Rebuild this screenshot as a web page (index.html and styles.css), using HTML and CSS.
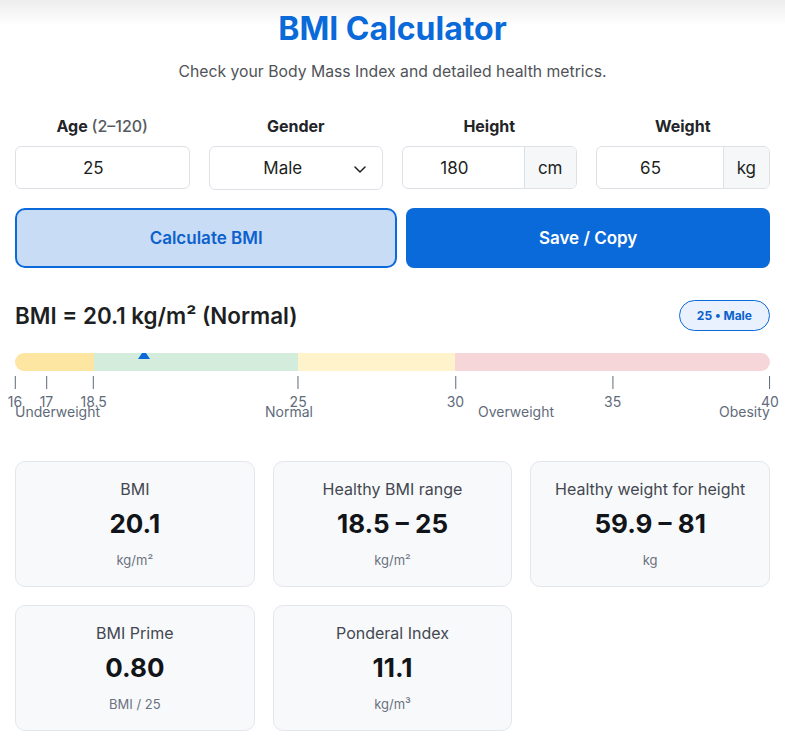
FILE: index.html
```html
<!DOCTYPE html>
<html lang="en">
<head>
<meta charset="utf-8">
<title>BMI Calculator</title>
<link rel="stylesheet" href="styles.css">
</head>
<body>
<main class="app">
  <h1 class="title">BMI Calculator</h1>
  <p class="subtitle">Check your Body Mass Index and detailed health metrics.</p>

  <section class="fields">
    <div class="field">
      <label class="field-label">Age <span class="muted">(2–120)</span></label>
      <div class="control">
        <input class="input" type="text" value="25">
      </div>
    </div>
    <div class="field">
      <label class="field-label">Gender</label>
      <div class="control select-wrap">
        <select class="select">
          <option>Male</option>
          <option>Female</option>
        </select>
        <svg class="chevron" width="12" height="7" viewBox="0 0 12 7" aria-hidden="true"><path d="M1 1l5 5 5-5" fill="none" stroke="#222" stroke-width="1.5" stroke-linecap="round" stroke-linejoin="round"/></svg>
      </div>
    </div>
    <div class="field">
      <label class="field-label">Height</label>
      <div class="control group">
        <input class="input" type="text" value="180">
        <span class="unit">cm</span>
      </div>
    </div>
    <div class="field">
      <label class="field-label">Weight</label>
      <div class="control group">
        <input class="input" type="text" value="65">
        <span class="unit">kg</span>
      </div>
    </div>
  </section>

  <section class="actions">
    <button class="btn btn-calc">Calculate BMI</button>
    <button class="btn btn-save">Save / Copy</button>
  </section>

  <section class="result">
    <h2 class="result-text">BMI = 20.1 kg/m² (Normal)</h2>
    <span class="badge">25 • Male</span>
  </section>

  <section class="scale">
    <div class="bar">
      <span class="seg seg-under" style="width:10.4167%"></span>
      <span class="seg seg-normal" style="width:27.0833%"></span>
      <span class="seg seg-over" style="width:20.8333%"></span>
      <span class="seg seg-obese" style="width:41.6667%"></span>
      <span class="marker" style="left:17.083%"></span>
    </div>
    <div class="ticks">
      <span class="tick" style="left:0%"><i></i><b>16</b></span>
      <span class="tick" style="left:4.1667%"><i></i><b>17</b></span>
      <span class="tick" style="left:10.4167%"><i></i><b>18.5</b></span>
      <span class="tick" style="left:37.5%"><i></i><b>25</b></span>
      <span class="tick" style="left:58.3333%"><i></i><b>30</b></span>
      <span class="tick" style="left:79.1667%"><i></i><b>35</b></span>
      <span class="tick" style="left:100%"><i></i><b>40</b></span>
    </div>
    <div class="categories">
      <span>Underweight</span>
      <span>Normal</span>
      <span>Overweight</span>
      <span>Obesity</span>
    </div>
  </section>

  <section class="cards">
    <div class="card">
      <div class="card-label">BMI</div>
      <div class="card-value">20.1</div>
      <div class="card-unit">kg/m²</div>
    </div>
    <div class="card">
      <div class="card-label">Healthy BMI range</div>
      <div class="card-value">18.5 – 25</div>
      <div class="card-unit">kg/m²</div>
    </div>
    <div class="card">
      <div class="card-label">Healthy weight for height</div>
      <div class="card-value">59.9 – 81</div>
      <div class="card-unit">kg</div>
    </div>
    <div class="card">
      <div class="card-label">BMI Prime</div>
      <div class="card-value">0.80</div>
      <div class="card-unit">BMI / 25</div>
    </div>
    <div class="card">
      <div class="card-label">Ponderal Index</div>
      <div class="card-value">11.1</div>
      <div class="card-unit">kg/m³</div>
    </div>
  </section>
</main>
</body>
</html>
```

FILE: styles.css
```css
* { box-sizing: border-box; }

html, body {
  margin: 0;
  padding: 0;
}

body {
  font-family: Inter, "Noto Sans", "Liberation Sans", sans-serif;
  color: #1d1f23;
  background: #ffffff linear-gradient(#ededed 0px, #f7f7f7 14px, #ffffff 26px) no-repeat;
  background-size: 100% 26px;
}

.app {
  padding: 0 15px;
}

.title {
  margin: 10px 0 0;
  text-align: center;
  font-size: 32px;
  line-height: 38px;
  font-weight: 700;
  color: #0b6ad9;
}

.subtitle {
  margin: 14px 0 0;
  text-align: center;
  font-size: 15.75px;
  line-height: 19px;
  color: #4f5358;
}

.fields {
  margin-top: 36px;
  display: grid;
  grid-template-columns: repeat(4, minmax(0, 1fr));
  column-gap: 19px;
}

.field {
  display: flex;
  flex-direction: column;
  align-items: stretch;
  min-width: 0;
}

.field-label {
  text-align: center;
  font-size: 16px;
  line-height: 19px;
  font-weight: 700;
  color: #222428;
  margin-bottom: 10px;
}

.muted {
  font-weight: 500;
  color: #555a61;
}

.control {
  display: flex;
  height: 43px;
  border: 1px solid #dde1e6;
  border-radius: 6px;
  background: #fff;
  overflow: hidden;
}

.input {
  flex: 1 1 0;
  width: 0;
  min-width: 0;
  border: 0;
  outline: none;
  background: transparent;
  font-family: inherit;
  font-size: 17px;
  color: #1d1f23;
  text-align: center;
  padding: 0 27px 0 9px;
}

.unit {
  flex: none;
  display: flex;
  align-items: center;
  padding: 0 13px;
  background: #f6f7f9;
  border-left: 1px solid #dde1e6;
  font-size: 17px;
  color: #1d1f23;
}

.select-wrap {
  position: relative;
  height: 44px;
}

.select {
  appearance: none;
  -webkit-appearance: none;
  flex: 1 1 0;
  width: 100%;
  min-width: 0;
  border: 0;
  outline: none;
  background: transparent;
  font-family: inherit;
  font-size: 17px;
  color: #1d1f23;
  text-align: center;
  text-align-last: center;
  padding: 0 26px 0 0;
}

.chevron {
  position: absolute;
  right: 16px;
  top: 19px;
  pointer-events: none;
}

.actions {
  margin-top: 18px;
  display: flex;
  gap: 9px;
}

.btn {
  flex: 1 1 auto;
  height: 60px;
  font-family: inherit;
  font-size: 17px;
  font-weight: 600;
  cursor: pointer;
}

.btn-calc {
  background: #c9dcf5;
  color: #0b62cc;
  border: 2px solid #0b6ad9;
  border-radius: 10px;
}

.btn-save {
  background: #0b6ad9;
  color: #ffffff;
  border: 0;
  border-radius: 8px;
}

.result {
  margin-top: 32px;
  display: flex;
  align-items: center;
  justify-content: space-between;
}

.result-text {
  margin: 0;
  font-size: 22.4px;
  line-height: 28px;
  font-weight: 600;
  color: #1d1f23;
}

.badge {
  display: inline-flex;
  align-items: center;
  height: 31px;
  padding: 0 17px;
  border: 1px solid #0b6ad9;
  border-radius: 16px;
  background: #e8f1fd;
  color: #0b62cc;
  font-size: 12px;
  font-weight: 700;
}

.scale {
  margin-top: 22px;
}

.bar {
  position: relative;
  display: flex;
  height: 18px;
  border-radius: 9px;
  overflow: hidden;
}

.seg { display: block; height: 100%; }
.seg-under { background: #fde6a2; }
.seg-normal { background: #d4ecdc; }
.seg-over { background: #fff3cc; }
.seg-obese { background: #f7d6d9; }

.marker {
  position: absolute;
  top: -3px;
  width: 0;
  height: 0;
  margin-left: -6px;
  border-left: 6px solid transparent;
  border-right: 6px solid transparent;
  border-bottom: 9px solid #0b6ad9;
}

.ticks {
  position: relative;
  height: 30px;
  margin-top: 5px;
}

.tick {
  position: absolute;
  top: 0;
  display: flex;
  flex-direction: column;
  align-items: center;
  transform: translateX(-50%);
}

.tick i {
  display: block;
  width: 1px;
  height: 13px;
  background: #5f6b7a;
}

.tick b {
  margin-top: 4px;
  font-weight: 400;
  font-size: 14px;
  line-height: 17px;
  color: #5f6b7a;
}

.categories {
  margin-top: -3px;
  display: flex;
  justify-content: space-between;
  font-size: 14px;
  line-height: 17px;
  color: #5f6b7a;
}

.cards {
  margin-top: 41px;
  display: grid;
  grid-template-columns: repeat(3, minmax(0, 1fr));
  gap: 18px;
}

.card {
  height: 126px;
  padding: 17px 10px 0;
  background: #f8f9fb;
  border: 1px solid #e3e7ec;
  border-radius: 10px;
  text-align: center;
}

.card-label {
  font-size: 16px;
  line-height: 20px;
  color: #434850;
}

.card-value {
  margin-top: 9px;
  font-size: 26px;
  line-height: 32px;
  font-weight: 700;
  color: #111418;
}

.card-unit {
  margin-top: 12px;
  font-size: 13px;
  line-height: 16px;
  color: #6b7280;
}
```
